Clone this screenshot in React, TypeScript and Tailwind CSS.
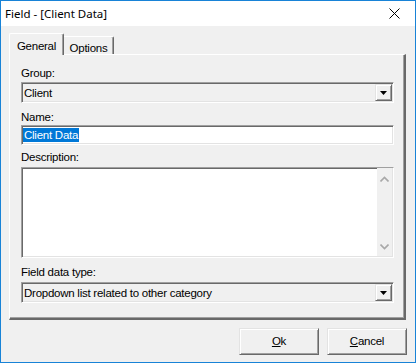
// Classic Win32 "Field" dialog: General tab with group/name/description/type fields.

const sunken =
  'border border-t-[#a0a0a0] border-l-[#a0a0a0] border-b-white border-r-white shadow-[inset_1px_1px_0_#696969,inset_-1px_-1px_0_#e3e3e3]'
const raised =
  'border border-t-[#e3e3e3] border-l-[#e3e3e3] border-b-[#696969] border-r-[#696969] shadow-[inset_1px_1px_0_#ffffff,inset_-1px_-1px_0_#a0a0a0]'

function DropArrow() {
  return (
    <div className={'w-[17px] h-[17px] bg-[#f0f0f0] flex items-center justify-center shrink-0 ' + raised}>
      <svg width="7" height="4" viewBox="0 0 7 4">
        <path d="M0 0h7L3.5 4z" fill="#000" />
      </svg>
    </div>
  )
}

function Combo({ value }: { value: string }) {
  return (
    <div className={'h-[21px] bg-[#f0f0f0] flex items-center pl-[2px] pr-[1px] ' + sunken}>
      <span className="flex-1 leading-[14px]">{value}</span>
      <DropArrow />
    </div>
  )
}

function Chevron({ up }: { up?: boolean }) {
  return (
    <svg width="9" height="6" viewBox="0 0 9 6">
      <path d={up ? 'M0.5 5.5L4.5 1.5L8.5 5.5' : 'M0.5 0.5L4.5 4.5L8.5 0.5'} stroke="#a8a8a8" strokeWidth="1.6" fill="none" />
    </svg>
  )
}

export default function App() {
  return (
    <div className="w-[416px] h-[363px] border border-[#1883d7] bg-[#f0f0f0] flex flex-col font-['Liberation_Sans',Arial,sans-serif] text-[11.5px] tracking-[-0.25px] text-black select-none">
      <div className="h-[25px] bg-white flex items-center pl-[4px] relative">
        <span className="font-['Noto_Sans',sans-serif] text-[11.5px] tracking-normal">Field - [Client Data]</span>
        <svg className="absolute left-[388px] top-[7px]" width="11" height="11" viewBox="0 0 11 11">
          <path d="M0.5 0.5L10.5 10.5M10.5 0.5L0.5 10.5" stroke="#000" strokeWidth="1" />
        </svg>
      </div>

      <div className="flex-1 pl-[8px] pr-[9px] pt-[7px]">
        <div className="flex items-end h-[21px]">
          <div className="relative z-10 -mb-px h-[22px] w-[55px] bg-[#f0f0f0] border-l border-t border-white border-r border-r-[#696969] shadow-[inset_-1px_0_0_#a0a0a0] rounded-t-[2px] flex items-start justify-center pt-[4px]">
            General
          </div>
          <div className="h-[18px] w-[50px] border-t border-t-white border-r border-r-[#696969] shadow-[inset_-1px_0_0_#a0a0a0] rounded-tr-[2px] flex items-start justify-center pt-[3px]">
            Options
          </div>
        </div>

        <div className="h-[266px] border-l border-t border-white border-r-2 border-b-2 border-r-[#696969] border-b-[#696969] shadow-[inset_-1px_-1px_0_#a0a0a0] pl-[11px] pr-[10px] pt-[11px]">
          <div className="h-[14px] leading-[14px]">Group:</div>
          <div className="mt-[2px]">
            <Combo value="Client" />
          </div>

          <div className="mt-[7px] h-[14px] leading-[14px]">Name:</div>
          <div className={'mt-px h-[20px] bg-white flex items-center pl-[1px] ' + sunken}>
            <span className="bg-[#0078d7] text-white leading-[14px] px-px">Client Data</span>
          </div>

          <div className="mt-[5px] h-[14px] leading-[14px]">Description:</div>
          <div className={'mt-[3px] h-[91px] bg-white flex justify-end ' + sunken}>
            <div className="w-[16px] h-full bg-[#f0f0f0] border-r border-r-[#e3e3e3] border-b border-b-[#e3e3e3] flex flex-col items-center justify-between pt-[8px] pb-[6px]">
              <Chevron up />
              <Chevron />
            </div>
          </div>

          <div className="mt-[7px] h-[14px] leading-[14px]">Field data type:</div>
          <div className="mt-[3px]">
            <Combo value="Dropdown list related to other category" />
          </div>
        </div>

        <div className="flex justify-end gap-[8px] mt-[8px] -mr-px">
          <div className={'w-[80px] h-[27px] bg-[#f0f0f0] flex items-center justify-center ' + raised}>
            <span><span className="underline">O</span>k</span>
          </div>
          <div className={'w-[80px] h-[27px] bg-[#f0f0f0] flex items-center justify-center ' + raised}>
            <span><span className="underline">C</span>ancel</span>
          </div>
        </div>
      </div>
    </div>
  )
}
